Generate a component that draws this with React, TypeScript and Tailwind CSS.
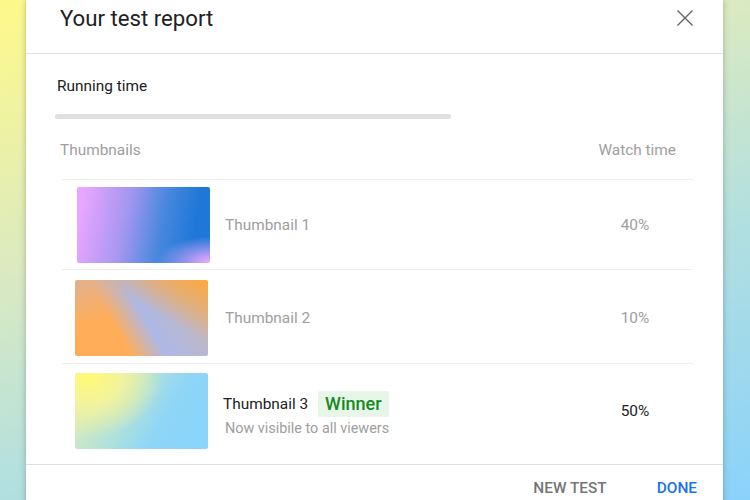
type Row = {
  name: string;
  share: string;
  thumb: string;
  pad: string;
  gap: string;
  winner?: boolean;
};

const rows: Row[] = [
  {
    name: 'Thumbnail 1',
    share: '40%',
    pad: 'pt-[7px] pb-[6px] pl-[15px]',
    gap: 'ml-[15px]',
    thumb:
      'bg-[radial-gradient(ellipse_40%_35%_at_100%_100%,#f3aaff_0%,rgba(243,170,255,0)_100%),linear-gradient(100deg,#e9a6ff_5%,#a196ef_38%,#4a88de_62%,#1f78d8_85%)]',
  },
  {
    name: 'Thumbnail 2',
    share: '10%',
    pad: 'pt-[10px] pb-[7px] pl-[13px]',
    gap: 'ml-[17px]',
    thumb:
      'bg-[linear-gradient(to_bottom_left,#ffa83c_0%,rgba(255,168,60,0.6)_20%,rgba(255,168,60,0)_42%),radial-gradient(ellipse_45%_60%_at_0%_0%,rgba(200,180,190,0.55)_0%,rgba(200,180,190,0)_100%),linear-gradient(60deg,#ffad58_32%,#adb8e6_52%,#bdb8c8_80%)]',
  },
  {
    name: 'Thumbnail 3',
    share: '50%',
    pad: 'pt-[9px] pb-[15px] pl-[13px]',
    gap: 'ml-[15px]',
    winner: true,
    thumb:
      'bg-[radial-gradient(ellipse_70%_100%_at_10%_5%,#fffa78_0%,#f2f39c_35%,rgba(220,238,190,0)_80%),linear-gradient(120deg,#e8f0b0_0%,#b4e2d8_40%,#8fd6f6_65%,#87d5fd_100%)]',
  },
];

export default function App() {
  return (
    <div className="h-screen overflow-hidden bg-[linear-gradient(160deg,#fff98a_0%,#dbeac0_35%,#b4e0de_62%,#8ad2fb_100%)] pl-[26px] font-['Roboto',sans-serif]">
      <div className="w-[697px] bg-white shadow-[0_0_6px_rgba(0,0,0,0.25)]">
        <header className="flex h-[54px] items-start justify-between border-b border-[#e0e0e0] pl-[34px] pr-[30px]">
          <h1 className="pt-[4px] text-[22.2px] leading-[28px] text-[#202124]">Your test report</h1>
          <button className="mt-[10px] text-[#616161]">
            <svg width="16" height="16" viewBox="0 0 16 16" fill="none" stroke="currentColor" strokeWidth="1.3">
              <path d="M0.5 0.5L15.5 15.5M15.5 0.5L0.5 15.5" />
            </svg>
          </button>
        </header>

        <section className="pt-[22px]">
          <p className="pl-[31px] text-[15.4px] leading-[20px] text-[#212121]">Running time</p>
          <div className="ml-[29px] mt-[18px] h-[5px] w-[396px] rounded-full bg-[#e0e0e0]" />

          <div className="mt-[21px] flex h-[39px] items-start justify-between pl-[34px] pr-[47px] text-[15.4px] leading-[20px] text-[#9e9e9e]">
            <span>Thumbnails</span>
            <span>Watch time</span>
          </div>

          <div className="ml-[36px] w-[631px]">
            {rows.map((row) => (
              <div key={row.name} className={`flex items-center border-t border-[#eeeeee] pr-[18px] ${row.pad}`}>
                <div className={`h-[76px] w-[133px] shrink-0 rounded-[2px] ${row.thumb}`} />
                {row.winner ? (
                  <div className={`${row.gap} flex-1 pt-[8px]`}>
                    <div className="flex items-center gap-[10px]">
                      <span className="text-[15.4px] leading-[20px] text-[#202124]">{row.name}</span>
                      <span className="rounded-[2px] bg-[#e8f5e9] px-[7px] text-[18px] font-medium leading-[26px] text-[#168a23]">
                        Winner
                      </span>
                    </div>
                    <p className="mt-[2px] pl-[2px] text-[14.4px] leading-[20px] text-[#9e9e9e]">Now visibile to all viewers</p>
                  </div>
                ) : (
                  <span className={`${row.gap} flex-1 text-[15.4px] leading-[20px] text-[#9e9e9e]`}>{row.name}</span>
                )}
                <span
                  className={`w-[80px] text-center text-[15.4px] leading-[20px] ${
                    row.winner ? 'text-[#202124]' : 'text-[#9e9e9e]'
                  }`}
                >
                  {row.share}
                </span>
              </div>
            ))}
          </div>
        </section>

        <footer className="flex justify-end gap-[50px] border-t border-[#e0e0e0] pr-[26px] pt-[13px] pb-[20px] text-[15.4px] font-medium leading-[20px]">
          <button className="text-[#757575]">NEW TEST</button>
          <button className="text-[#1a73e8]">DONE</button>
        </footer>
      </div>
    </div>
  );
}
